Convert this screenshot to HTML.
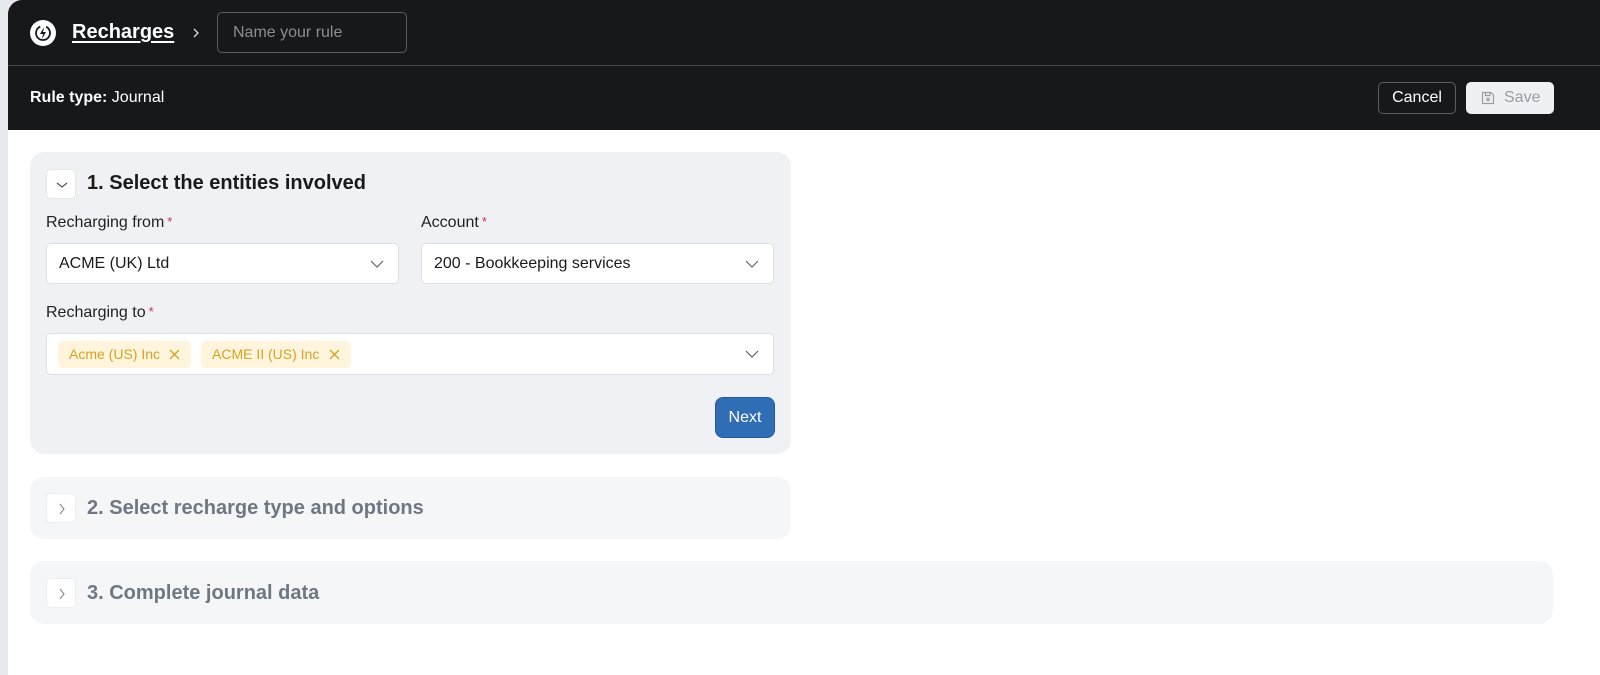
<!DOCTYPE html>
<html><head><style>
*{box-sizing:border-box;margin:0;padding:0}
body{width:1600px;height:675px;background:#e6e9ed;font-family:"Liberation Sans",sans-serif;position:relative;overflow:hidden}
.page{position:absolute;left:8px;top:0;right:0;bottom:0;background:#fff;border-top-left-radius:14px;overflow:hidden}
.hdr{position:absolute;left:0;top:0;right:0;height:130px;background:#17181a}
.hline{position:absolute;left:0;right:0;top:65px;height:1px;background:#4a4c50}
.abs{position:absolute}
.card{position:absolute;border-radius:14px}
.tog{position:absolute;width:30px;height:30px;background:#fff;border-radius:5px;border:1px solid #e4e6ea}
.sel{position:absolute;background:#fff;border:1px solid #dcdfe5;border-radius:5px;height:41px;font-size:16px;color:#1a1a1a;padding:0 12px;line-height:40px}
.chev{position:absolute;right:14px;top:15px}
.lbl{position:absolute;font-size:16px;color:#222}
.lbl b{color:#d0304a;font-weight:normal;font-size:13px;vertical-align:top;margin-left:3px}
.tag{position:absolute;top:7px;height:27px;background:#fff5dc;border-radius:5px;color:#d9a022;font-size:14px;line-height:27px;padding-left:11px}
</style></head><body>
<div class="page">
<div class="hdr">
 <div class="hline"></div>
 <svg class="abs" style="left:22px;top:20px" width="26" height="26" viewBox="0 0 26 26"><circle cx="13" cy="13" r="13" fill="#fff"/><circle cx="13" cy="13" r="7" fill="none" stroke="#17181a" stroke-width="1.8" stroke-dasharray="30 6"/><path d="M14 7 L10 14 H13 L12 19 L16 12 H13 Z" fill="#17181a"/></svg>
 <div class="abs" style="left:64px;top:21px;color:#fff;font-size:20px;font-weight:bold;text-decoration:underline;text-underline-offset:3px">Recharges</div>
 <svg class="abs" style="left:183px;top:27px" width="10" height="12"><path d="M3 2 L7 6 L3 10" stroke="#ddd" stroke-width="1.3" fill="none"/></svg>
 <div class="abs" style="left:209px;top:12px;width:190px;height:41px;border:1px solid #5a5d62;border-radius:5px;color:#8a8d92;font-size:16px;line-height:40px;padding-left:15px">Name your rule</div>
 <div class="abs" style="left:22px;top:89px;color:#fff;font-size:16px"><b>Rule type:</b> Journal</div>
 <div class="abs" style="left:1370px;top:82px;width:78px;height:32px;border:1px solid #5a5d62;border-radius:5px;color:#fff;font-size:16px;line-height:30px;text-align:center">Cancel</div>
 <div class="abs" style="left:1458px;top:82px;width:88px;height:32px;background:#eff0f3;border-radius:5px;color:#9a9da3;font-size:16px;line-height:32px;padding-left:38px">Save
  <svg class="abs" style="left:14px;top:8px" width="16" height="16" viewBox="0 0 16 16"><path d="M2.5 2.5 H11 L13.5 5 V13.5 H2.5 Z" fill="none" stroke="#9a9da3" stroke-width="1.2"/><path d="M5.5 2.5 V5.5 H10 V2.5" fill="none" stroke="#9a9da3" stroke-width="1.2"/><circle cx="8" cy="9.5" r="1.3" fill="none" stroke="#9a9da3" stroke-width="1.2"/></svg></div>
</div>

<div class="card" style="left:22px;top:152px;width:761px;height:302px;background:#f0f1f5">
 <div class="tog" style="left:16px;top:17px"><svg class="abs" style="left:9px;top:11px" width="12" height="8"><path d="M1 2 L6 6 L11 2" stroke="#555" stroke-width="1.2" fill="none"/></svg></div>
 <div class="abs" style="left:57px;top:20px;font-size:20px;font-weight:bold;color:#1a1a1a">1. Select the entities involved</div>
 <div class="lbl" style="left:16px;top:62px">Recharging from<b>*</b></div>
 <div class="sel" style="left:16px;top:91px;width:353px">ACME (UK) Ltd<svg class="chev" width="14" height="10"><path d="M1 2 L7 8 L13 2" stroke="#666" stroke-width="1.2" fill="none"/></svg></div>
 <div class="lbl" style="left:391px;top:62px">Account<b>*</b></div>
 <div class="sel" style="left:391px;top:91px;width:353px">200 - Bookkeeping services<svg class="chev" width="14" height="10"><path d="M1 2 L7 8 L13 2" stroke="#666" stroke-width="1.2" fill="none"/></svg></div>
 <div class="lbl" style="left:16px;top:152px">Recharging to<b>*</b></div>
 <div class="sel" style="left:16px;top:181px;width:728px;height:42px">
  <div class="tag" style="left:11px;width:133px">Acme (US) Inc<svg class="abs" style="right:11px;top:8px" width="11" height="11"><path d="M1 1 L10 10 M10 1 L1 10" stroke="#d9a022" stroke-width="1.3"/></svg></div>
  <div class="tag" style="left:154px;width:150px">ACME II (US) Inc<svg class="abs" style="right:11px;top:8px" width="11" height="11"><path d="M1 1 L10 10 M10 1 L1 10" stroke="#d9a022" stroke-width="1.3"/></svg></div>
  <svg class="chev" width="14" height="10"><path d="M1 2 L7 8 L13 2" stroke="#666" stroke-width="1.2" fill="none"/></svg>
 </div>
 <div class="abs" style="left:685px;top:245px;width:60px;height:41px;background:#2f6db5;border:1px solid #245a99;border-radius:8px;color:#fff;font-size:16px;line-height:39px;text-align:center">Next</div>
</div>

<div class="card" style="left:22px;top:477px;width:761px;height:62px;background:#f5f6f8">
 <div class="tog" style="left:16px;top:16px;border-color:#eceef1"><svg class="abs" style="left:11px;top:9px" width="8" height="12"><path d="M2 1 L6 6 L2 11" stroke="#888" stroke-width="1.1" fill="none"/></svg></div>
 <div class="abs" style="left:57px;top:20px;font-size:20px;font-weight:bold;color:#6f7782">2. Select recharge type and options</div>
</div>
<div class="card" style="left:22px;top:561px;width:1523px;height:63px;background:#f5f6f8">
 <div class="tog" style="left:16px;top:17px;border-color:#eceef1"><svg class="abs" style="left:11px;top:9px" width="8" height="12"><path d="M2 1 L6 6 L2 11" stroke="#888" stroke-width="1.1" fill="none"/></svg></div>
 <div class="abs" style="left:57px;top:21px;font-size:20px;font-weight:bold;color:#6f7782">3. Complete journal data</div>
</div>
</div>
</body></html>
